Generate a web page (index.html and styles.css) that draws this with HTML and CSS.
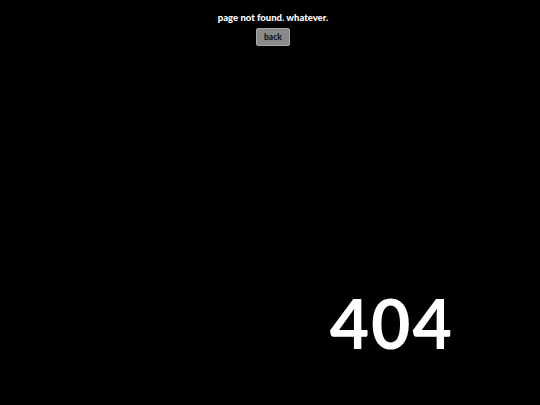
FILE: index.html
```html
<!DOCTYPE html>
<html>
<head>
<meta charset="utf-8">
<link rel="stylesheet" href="styles.css">
</head>
<body>
<div class="page">
  <header class="top">
    <p class="msg">page not found. whatever.</p>
    <button class="back">back</button>
  </header>
  <div class="code-wrap">
    <div class="code">404</div>
  </div>
</div>
</body>
</html>
```

FILE: styles.css
```css
html, body {
  margin: 0;
  padding: 0;
  background: #000;
}
.page {
  height: 405px;
  display: flex;
  flex-direction: column;
  font-family: Lato, "Noto Sans", sans-serif;
  color: #fff;
}
.top {
  display: flex;
  flex-direction: column;
  align-items: center;
  padding-top: 12px;
  padding-left: 6px;
}
.msg {
  margin: 0;
  font-size: 9.5px;
  font-weight: 900;
  line-height: 11px;
}
.back {
  margin-top: 5px;
  width: 34px;
  height: 18px;
  padding: 0;
  background: #8a8a8a;
  border: 1px solid #a8a8a8;
  border-radius: 2px;
  color: #151515;
  font-family: Lato, "Noto Sans", sans-serif;
  font-size: 8.5px;
  font-weight: 900;
}
.code-wrap {
  flex: 1;
  display: flex;
  justify-content: flex-end;
  align-items: flex-end;
  padding-right: 88px;
  padding-bottom: 48px;
}
.code {
  font-size: 68px;
  font-weight: 700;
  line-height: 1;
  letter-spacing: 2px;
  margin-right: -2px;
}
```
